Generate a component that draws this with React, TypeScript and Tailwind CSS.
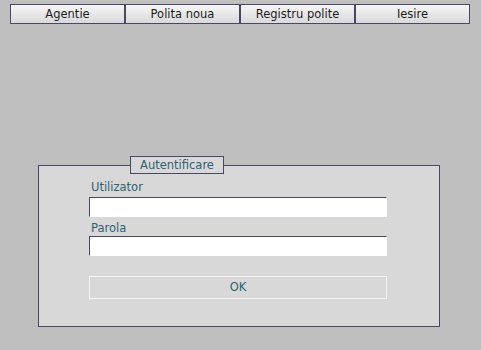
import React from 'react';

const menu = ['Agentie', 'Polita noua', 'Registru polite', 'Iesire'];

function NavButton({ label }: { label: string }) {
  return (
    <button
      type="button"
      className="w-[115px] h-[20px] border border-[#4b4664] bg-gradient-to-b from-[#f6f6f6] to-[#d9d9d9] text-[11.5px] leading-[18px] text-[#1c1c1c] text-center"
    >
      {label}
    </button>
  );
}

export default function App() {
  return (
    <div
      className="w-[481px] h-[350px] bg-[#bfbfbf] overflow-hidden"
      style={{ fontFamily: '"DejaVu Sans", Verdana, sans-serif' }}
    >
      {/* meniu */}
      <div className="flex pl-[10px] pt-[4px]">
        {menu.map((m) => (
          <NavButton key={m} label={m} />
        ))}
      </div>

      {/* login */}
      <fieldset className="ml-[38px] mt-[132px] w-[402px] h-[171px] border border-[#4b4664] bg-[#d8d8d8] p-0">
        <legend className="ml-[91px] w-[94px] h-[18px] border border-[#4b4664] bg-[#d8d8d8] text-[11.5px] leading-[16px] text-[#2e6273]">
          <span className="block w-full text-center">Autentificare</span>
        </legend>
        <div className="pl-[50px] pt-[6px]">
          <label className="block text-[11.5px] leading-[14px] text-[#2e6273] pl-[2px] mb-[3px]">Utilizator</label>
          <input
            type="text"
            className="block w-[298px] h-[20px] bg-white border-t border-l border-t-[#4b4664] border-l-[#4b4664] border-r border-b border-r-white border-b-white outline-none"
          />
          <label className="block text-[11.5px] leading-[14px] text-[#2e6273] pl-[2px] mt-[4px] mb-[1px]">Parola</label>
          <input
            type="password"
            className="block w-[298px] h-[20px] bg-white border-t border-l border-t-[#4b4664] border-l-[#4b4664] border-r border-b border-r-white border-b-white outline-none"
          />
          <button
            type="button"
            className="block mt-[20px] w-[298px] h-[23px] border border-[#f4f4f4] bg-[#d8d8d8] text-[11.5px] text-[#2e6273] text-center"
          >
            OK
          </button>
        </div>
      </fieldset>
    </div>
  );
}
